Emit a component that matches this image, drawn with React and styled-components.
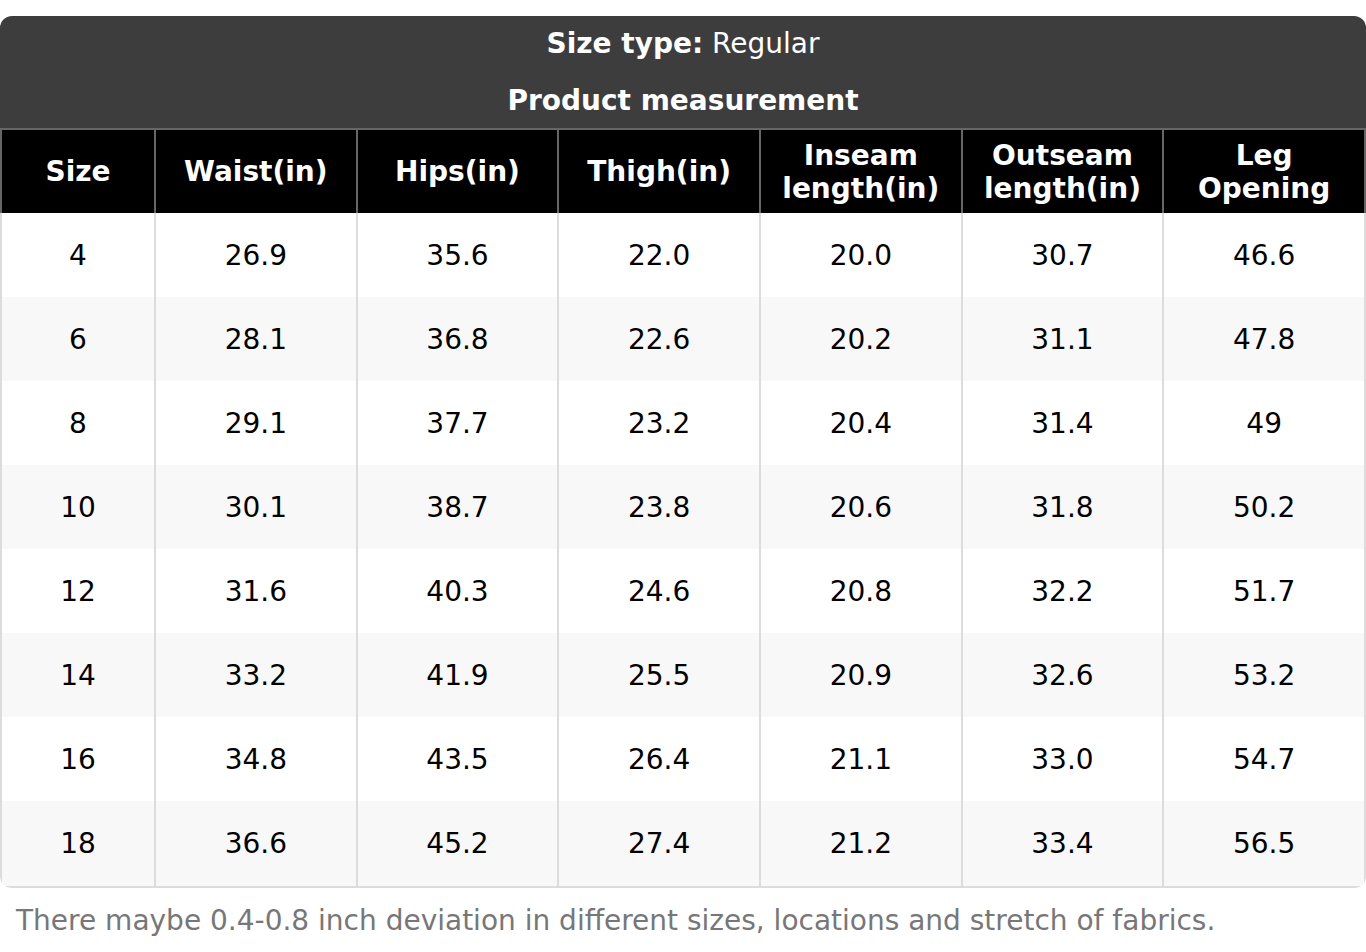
import React from "react";
import styled, { createGlobalStyle } from "styled-components";

const Global = createGlobalStyle`
  html, body { margin: 0; padding: 0; background: #fff; }
  body { font-family: "DejaVu Sans", Verdana, sans-serif; padding-top: 16px; }
`;

const Card = styled.div`
  border-radius: 12px;
  overflow: hidden;
  background: #fff;
`;

const Banner = styled.div`
  background: #3d3d3d;
  color: #fff;
  display: flex;
  flex-direction: column;
  padding-top: 0;
`;

const BannerLine = styled.div`
  height: 56px;
  display: flex;
  align-items: center;
  justify-content: center;
  font-size: 28px;
  line-height: 33px;
  font-weight: ${(p) => (p.$bold ? 700 : 400)};
  padding-bottom: ${(p) => (p.$bold ? "0" : "2px")};
  box-sizing: border-box;
`;

const Strong = styled.span`
  font-weight: 700;
`;

const Table = styled.table`
  width: 100%;
  border-collapse: collapse;
  table-layout: fixed;
  font-size: 28px;
`;

const Th = styled.th`
  background: #000;
  color: #fff;
  font-weight: 700;
  height: 84px;
  padding: 0 8px;
  border: 2px solid #666;
  border-bottom: none;
  line-height: 33px;
  text-align: center;
  vertical-align: middle;
  box-sizing: border-box;
`;

const Row = styled.tr`
  background: ${(p) => (p.$alt ? "#f8f8f8" : "#fff")};
  &:last-child td {
    height: 86px;
    border-bottom: 2px solid #dcdcdc;
  }
`;

const Td = styled.td`
  height: 84px;
  border-left: 2px solid #dcdcdc;
  border-right: 2px solid #dcdcdc;
  color: #000;
  text-align: center;
  vertical-align: middle;
  padding: 0;
  line-height: 33px;
  box-sizing: border-box;
`;

const Note = styled.div`
  margin-top: 16px;
  padding-left: 16px;
  color: #777;
  font-size: 28px;
  line-height: 33px;
`;

const headers = [
  "Size",
  "Waist(in)",
  "Hips(in)",
  "Thigh(in)",
  ["Inseam", "length(in)"],
  ["Outseam", "length(in)"],
  ["Leg", "Opening"],
];

const rows = [
  ["4", "26.9", "35.6", "22.0", "20.0", "30.7", "46.6"],
  ["6", "28.1", "36.8", "22.6", "20.2", "31.1", "47.8"],
  ["8", "29.1", "37.7", "23.2", "20.4", "31.4", "49"],
  ["10", "30.1", "38.7", "23.8", "20.6", "31.8", "50.2"],
  ["12", "31.6", "40.3", "24.6", "20.8", "32.2", "51.7"],
  ["14", "33.2", "41.9", "25.5", "20.9", "32.6", "53.2"],
  ["16", "34.8", "43.5", "26.4", "21.1", "33.0", "54.7"],
  ["18", "36.6", "45.2", "27.4", "21.2", "33.4", "56.5"],
];

export default function App() {
  return (
    <>
      <Global />
      <Card>
        <Banner>
          <BannerLine>
            <Strong>Size type:</Strong>&nbsp;Regular
          </BannerLine>
          <BannerLine $bold>Product measurement</BannerLine>
        </Banner>
        <Table>
          <colgroup>
            <col style={{ width: "154px" }} />
            <col />
            <col />
            <col />
            <col />
            <col />
            <col />
          </colgroup>
          <thead>
            <tr>
              {headers.map((h, i) => (
                <Th key={i}>
                  {Array.isArray(h) ? (
                    <>
                      {h[0]}
                      <br />
                      {h[1]}
                    </>
                  ) : (
                    h
                  )}
                </Th>
              ))}
            </tr>
          </thead>
          <tbody>
            {rows.map((r, i) => (
              <Row key={i} $alt={i % 2 === 1}>
                {r.map((c, j) => (
                  <Td key={j}>{c}</Td>
                ))}
              </Row>
            ))}
          </tbody>
        </Table>
      </Card>
      <Note>
        There maybe 0.4-0.8 inch deviation in different sizes, locations and stretch of fabrics.
      </Note>
    </>
  );
}
